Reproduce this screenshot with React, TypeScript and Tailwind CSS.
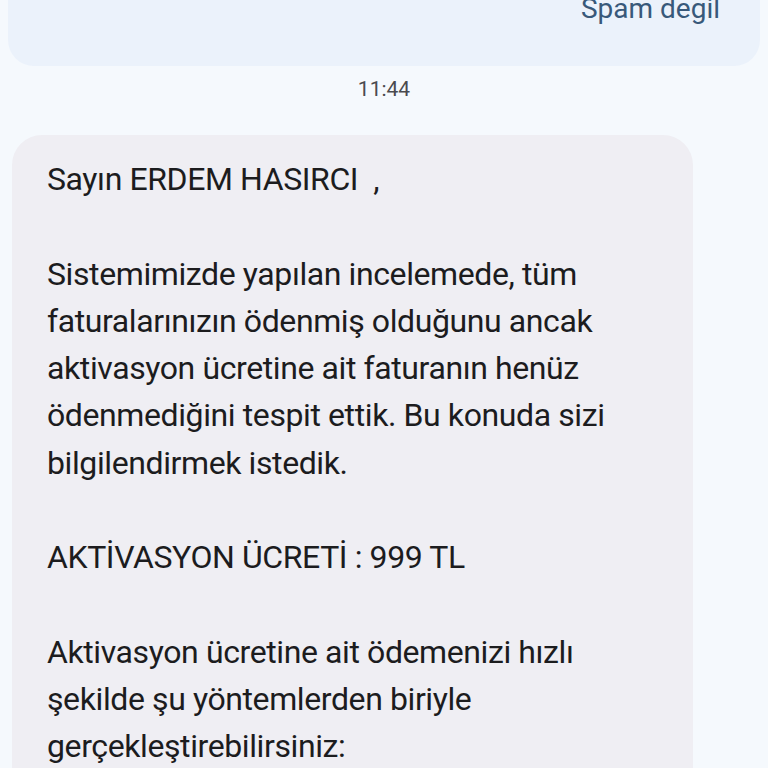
export default function App() {
  const font = { fontFamily: "Roboto, 'Noto Sans', sans-serif" };
  return (
    <div
      className="h-[768px] w-[768px] overflow-hidden bg-[#f5f9fd] text-[#1c1c1e]"
      style={font}
    >
      {/* spam banner, cut off at top */}
      <div className="mx-2 -mt-[40px] flex h-[106px] items-start justify-end rounded-[26px] bg-[#ebf2fb] pr-[40px] pt-[33px]">
        <span className="text-[28px] leading-[32px] text-[#38597a]">Spam degil</span>
      </div>

      <div className="mt-[11px] text-center text-[21px] leading-[24px] text-[#4a4a4e]">
        11:44
      </div>

      <div className="ml-[12px] mt-[34px] w-[681px] rounded-[30px] bg-[#efeef3] pl-[35px] pr-6 pt-[21px] pb-10 text-[32px] leading-[47.25px] tracking-[-0.4px]">
        <p>Sayın ERDEM HASIRCI&nbsp;&nbsp;,</p>
        <p>&nbsp;</p>
        <p>
          Sistemimizde yapılan incelemede, tüm
          <br />
          faturalarınızın ödenmiş olduğunu ancak
          <br />
          aktivasyon ücretine ait faturanın henüz
          <br />
          ödenmediğini tespit ettik. Bu konuda sizi
          <br />
          bilgilendirmek istedik.
        </p>
        <p>&nbsp;</p>
        <p>AKTİVASYON ÜCRETİ : 999 TL</p>
        <p>&nbsp;</p>
        <p>
          Aktivasyon ücretine ait ödemenizi hızlı
          <br />
          şekilde şu yöntemlerden biriyle
          <br />
          gerçekleştirebilirsiniz:
        </p>
      </div>
    </div>
  );
}
